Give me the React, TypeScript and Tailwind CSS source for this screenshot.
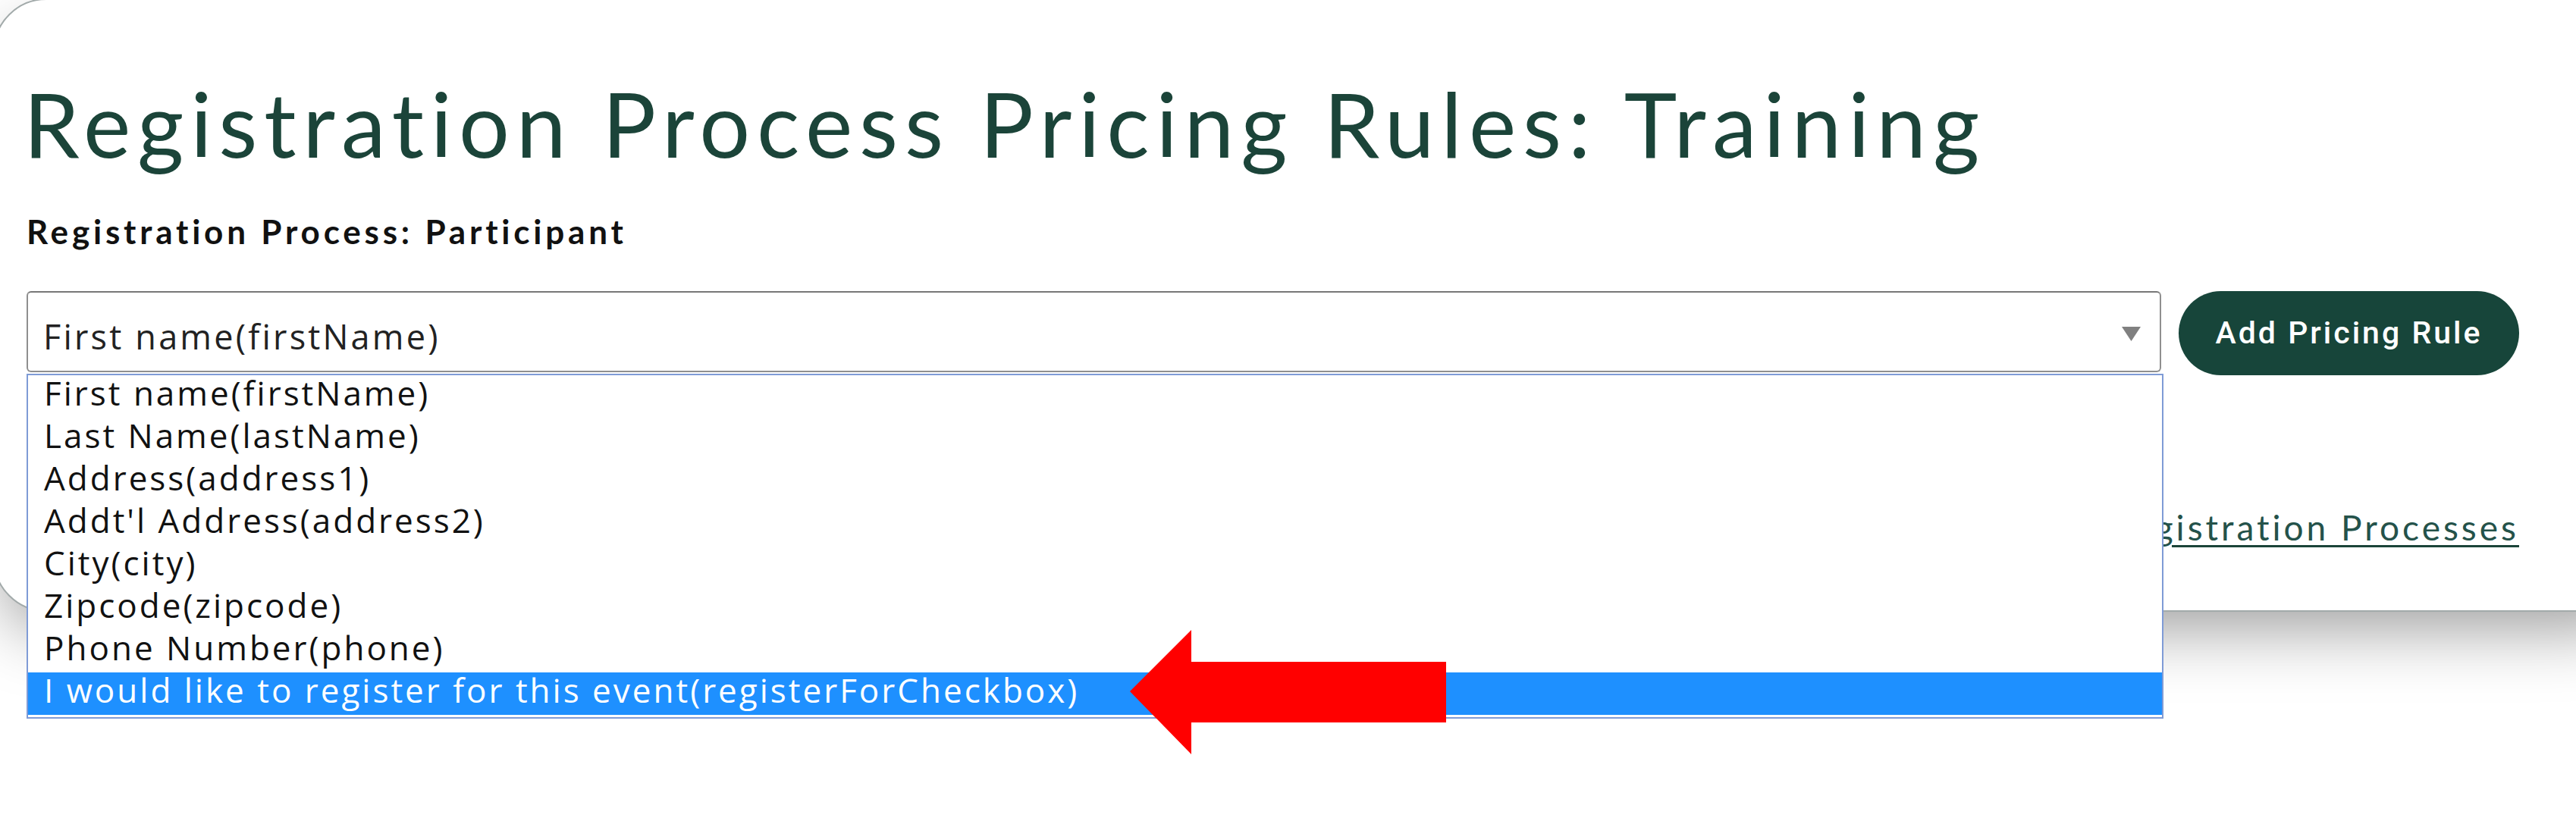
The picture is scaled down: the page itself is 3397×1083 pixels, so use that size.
import React from 'react';

const options = [
  'First name(firstName)',
  'Last Name(lastName)',
  'Address(address1)',
  "Addt'l Address(address2)",
  'City(city)',
  'Zipcode(zipcode)',
  'Phone Number(phone)',
  'I would like to register for this event(registerForCheckbox)',
];

const selectedIndex = 7;

export default function App() {
  return (
    <div className="relative w-full h-[1083px] overflow-hidden bg-white">
      <div className="ml-[-9px] mt-[-2px] w-[3500px] h-[809px] rounded-[70px] border-2 border-[#a2aaaa] bg-white shadow-[0_35px_90px_-15px_rgba(0,0,0,0.4)] pl-[42px] pr-[167px] pt-[106px]">
        <h1 className="font-['Lato',sans-serif] text-[118px] leading-none font-normal text-[#1b4439] tracking-[8.8px] -ml-[4px] -mt-[2px] whitespace-nowrap">
          Registration Process Pricing Rules: Training
        </h1>
        <p className="mt-[61px] font-['Lato',sans-serif] text-[44px] leading-none font-bold text-[#111] tracking-[4.8px] whitespace-nowrap">
          Registration Process: Participant
        </p>

        <div className="mt-[57px] flex items-start gap-[23px]">
          <div className="relative flex-1">
            <div className="h-[107px] flex items-center justify-between rounded-[6px] border-2 border-[#8f8f8f] border-t-[#777] bg-white pl-[20px] pr-[25px]">
              <span className="pt-[12px] font-['Open_Sans',sans-serif] text-[45px] leading-none text-[#222] tracking-[3.2px] whitespace-nowrap">
                First name(firstName)
              </span>
              <svg width="25" height="19" viewBox="0 0 25 19" className="mt-[6px]">
                <polygon points="0,0 25,0 12.5,19" fill="#808080" />
              </svg>
            </div>

            <ul className="absolute left-0 top-[109px] z-10 w-[2818px] border-2 border-[#7f9bd6] bg-white pb-[3px]">
              {options.map((opt, i) => (
                <li
                  key={opt}
                  className={
                    'h-[56px] pl-[21px] pt-[1px] font-[\'Open_Sans\',sans-serif] text-[44px] leading-none tracking-[3px] whitespace-nowrap ' +
                    (i === selectedIndex ? 'bg-[#1e90ff] text-white' : 'text-[#111]')
                  }
                >
                  {opt}
                </li>
              ))}
            </ul>
          </div>

          <button className="w-[449px] h-[111px] shrink-0 rounded-full bg-[#17453a] text-white font-['Roboto',sans-serif] font-medium text-[41px] tracking-[3px] flex items-center justify-center">
            Add Pricing Rule
          </button>
        </div>

        <div className="mt-[178px] flex justify-end">
          <a
            href="#"
            className="font-['Lato',sans-serif] text-[46px] leading-none text-[#24524a] tracking-[4px] underline decoration-[#1b4439] decoration-[3px] underline-offset-[6px] whitespace-nowrap"
          >
            Back to Registration Processes
          </a>
        </div>
      </div>

      {/* annotation arrow */}
      <svg
        className="absolute left-[1488px] top-[829px] z-20"
        width="420"
        height="168"
        viewBox="0 0 420 168"
      >
        <polygon points="2,83 83,2 83,44 419,44 419,124 83,124 83,166" fill="#ff0000" />
      </svg>
    </div>
  );
}
